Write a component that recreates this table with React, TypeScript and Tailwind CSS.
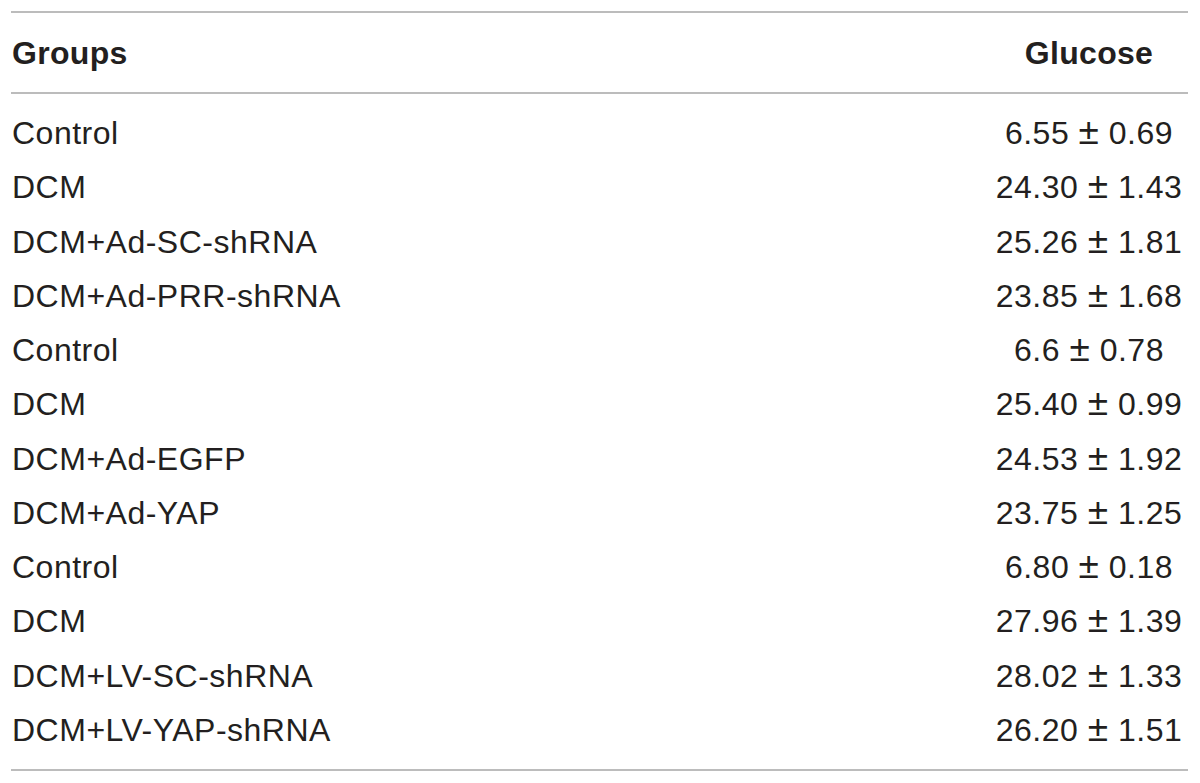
import React from "react";

const rows: [string, string, string][] = [
  ["Control", "6.55", "0.69"],
  ["DCM", "24.30", "1.43"],
  ["DCM+Ad-SC-shRNA", "25.26", "1.81"],
  ["DCM+Ad-PRR-shRNA", "23.85", "1.68"],
  ["Control", "6.6", "0.78"],
  ["DCM", "25.40", "0.99"],
  ["DCM+Ad-EGFP", "24.53", "1.92"],
  ["DCM+Ad-YAP", "23.75", "1.25"],
  ["Control", "6.80", "0.18"],
  ["DCM", "27.96", "1.39"],
  ["DCM+LV-SC-shRNA", "28.02", "1.33"],
  ["DCM+LV-YAP-shRNA", "26.20", "1.51"],
];

export default function App() {
  return (
    <div
      className="w-[1200px] h-[783px] bg-white pt-[11px] pl-[11px] text-[#231f20]"
      style={{ fontFamily: '"Liberation Sans", Arial, Helvetica, sans-serif' }}
    >
      <div className="w-[1177px] border-t-2 border-b-2 border-[#bcbcbc]">
        <div className="grid grid-cols-[1fr_198px] h-[81px] items-center border-b-2 border-[#bcbcbc] text-[32px] font-bold tracking-[0.3px]">
          <div className="pl-px">Groups</div>
          <div className="text-center">Glucose</div>
        </div>
        <div className="py-[12px]">
          {rows.map(([g, a, b], i) => (
            <div
              key={i}
              className="grid grid-cols-[1fr_198px] h-[54.25px] items-center text-[32px] leading-[32px] tracking-[0.5px]"
            >
              <div className="pl-px">{g}</div>
              <div className="text-center whitespace-nowrap">
                {a} <span className="text-[37px] leading-[28px]">±</span> {b}
              </div>
            </div>
          ))}
        </div>
      </div>
    </div>
  );
}
